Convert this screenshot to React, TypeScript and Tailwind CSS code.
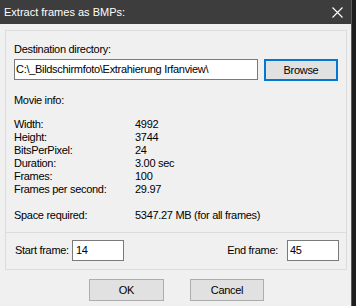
import React from "react";

export default function App() {
  return (
    <div className="w-[356px] h-[306px] flex font-['Liberation_Sans',Arial,sans-serif] text-[11px] leading-[13px] text-black overflow-hidden">
      <div className="w-[351px] h-full flex flex-col bg-[#f0f0f0]">
        <div className="h-[24px] shrink-0 bg-[#3d3d3d] flex items-center justify-between pl-[4px] pr-[8px] text-white">
          <span className="text-[11px] leading-[24px]">Extract frames as BMPs:</span>
          <svg width="11" height="11" viewBox="0 0 11 11" className="block">
            <path d="M0.5 0.5 L10.5 10.5 M10.5 0.5 L0.5 10.5" stroke="#ffffff" strokeWidth="1.1" fill="none" />
          </svg>
        </div>
        <div className="flex-1 pt-[6px] pl-[5px] tracking-[-0.3px]">
          <div className="w-[342px] h-[240px] border border-[#dcdcdc] flex flex-col">
            <div className="pl-[8px] pt-[12px]">
              <div>Destination directory:</div>
              <div className="flex items-start mt-[3px]">
                <div className="w-[244px] h-[21px] border border-[#7a7a7a] bg-white flex items-center pl-[1px] whitespace-nowrap">
                  C:\_Bildschirmfoto\Extrahierung Irfanview\
                </div>
                <div className="ml-[6px] w-[74px] h-[22px] border-2 border-[#0078d7] bg-[#e1e1e1] flex items-center justify-center">
                  Browse
                </div>
              </div>
              <div className="mt-[13px]">Movie info:</div>
              <div className="mt-[11px] grid grid-cols-[121px_1fr]">
                <div>Width:</div>
                <div>4992</div>
                <div>Height:</div>
                <div>3744</div>
                <div>BitsPerPixel:</div>
                <div>24</div>
                <div>Duration:</div>
                <div>3.00 sec</div>
                <div>Frames:</div>
                <div>100</div>
                <div>Frames per second:</div>
                <div>29.97</div>
              </div>
              <div className="mt-[13px] grid grid-cols-[121px_1fr]">
                <div>Space required:</div>
                <div>5347.27 MB (for all frames)</div>
              </div>
            </div>
            <div className="mt-[10px] h-px bg-[#dcdcdc]" />
            <div className="pt-[7px] pl-[9px] pr-[7px] flex items-center justify-between">
              <div className="flex items-center">
                <div className="w-[57px]">Start frame:</div>
                <div className="w-[52px] h-[21px] border border-[#7a7a7a] bg-white flex items-center pl-[3px]">14</div>
              </div>
              <div className="flex items-center">
                <div className="mr-[9px]">End frame:</div>
                <div className="w-[52px] h-[21px] border border-[#7a7a7a] bg-white flex items-center pl-[2px]">45</div>
              </div>
            </div>
          </div>
          <div className="mt-[9px] pl-[84px] flex">
            <div className="w-[75px] h-[22px] border border-[#adadad] bg-[#e1e1e1] flex items-center justify-center">OK</div>
            <div className="ml-[26px] w-[74px] h-[22px] border border-[#adadad] bg-[#e1e1e1] flex items-center justify-center">Cancel</div>
          </div>
        </div>
      </div>
      <div className="flex-1 h-full bg-[#1e1e1e] border-l border-[#5a5a5a]" />
    </div>
  );
}
